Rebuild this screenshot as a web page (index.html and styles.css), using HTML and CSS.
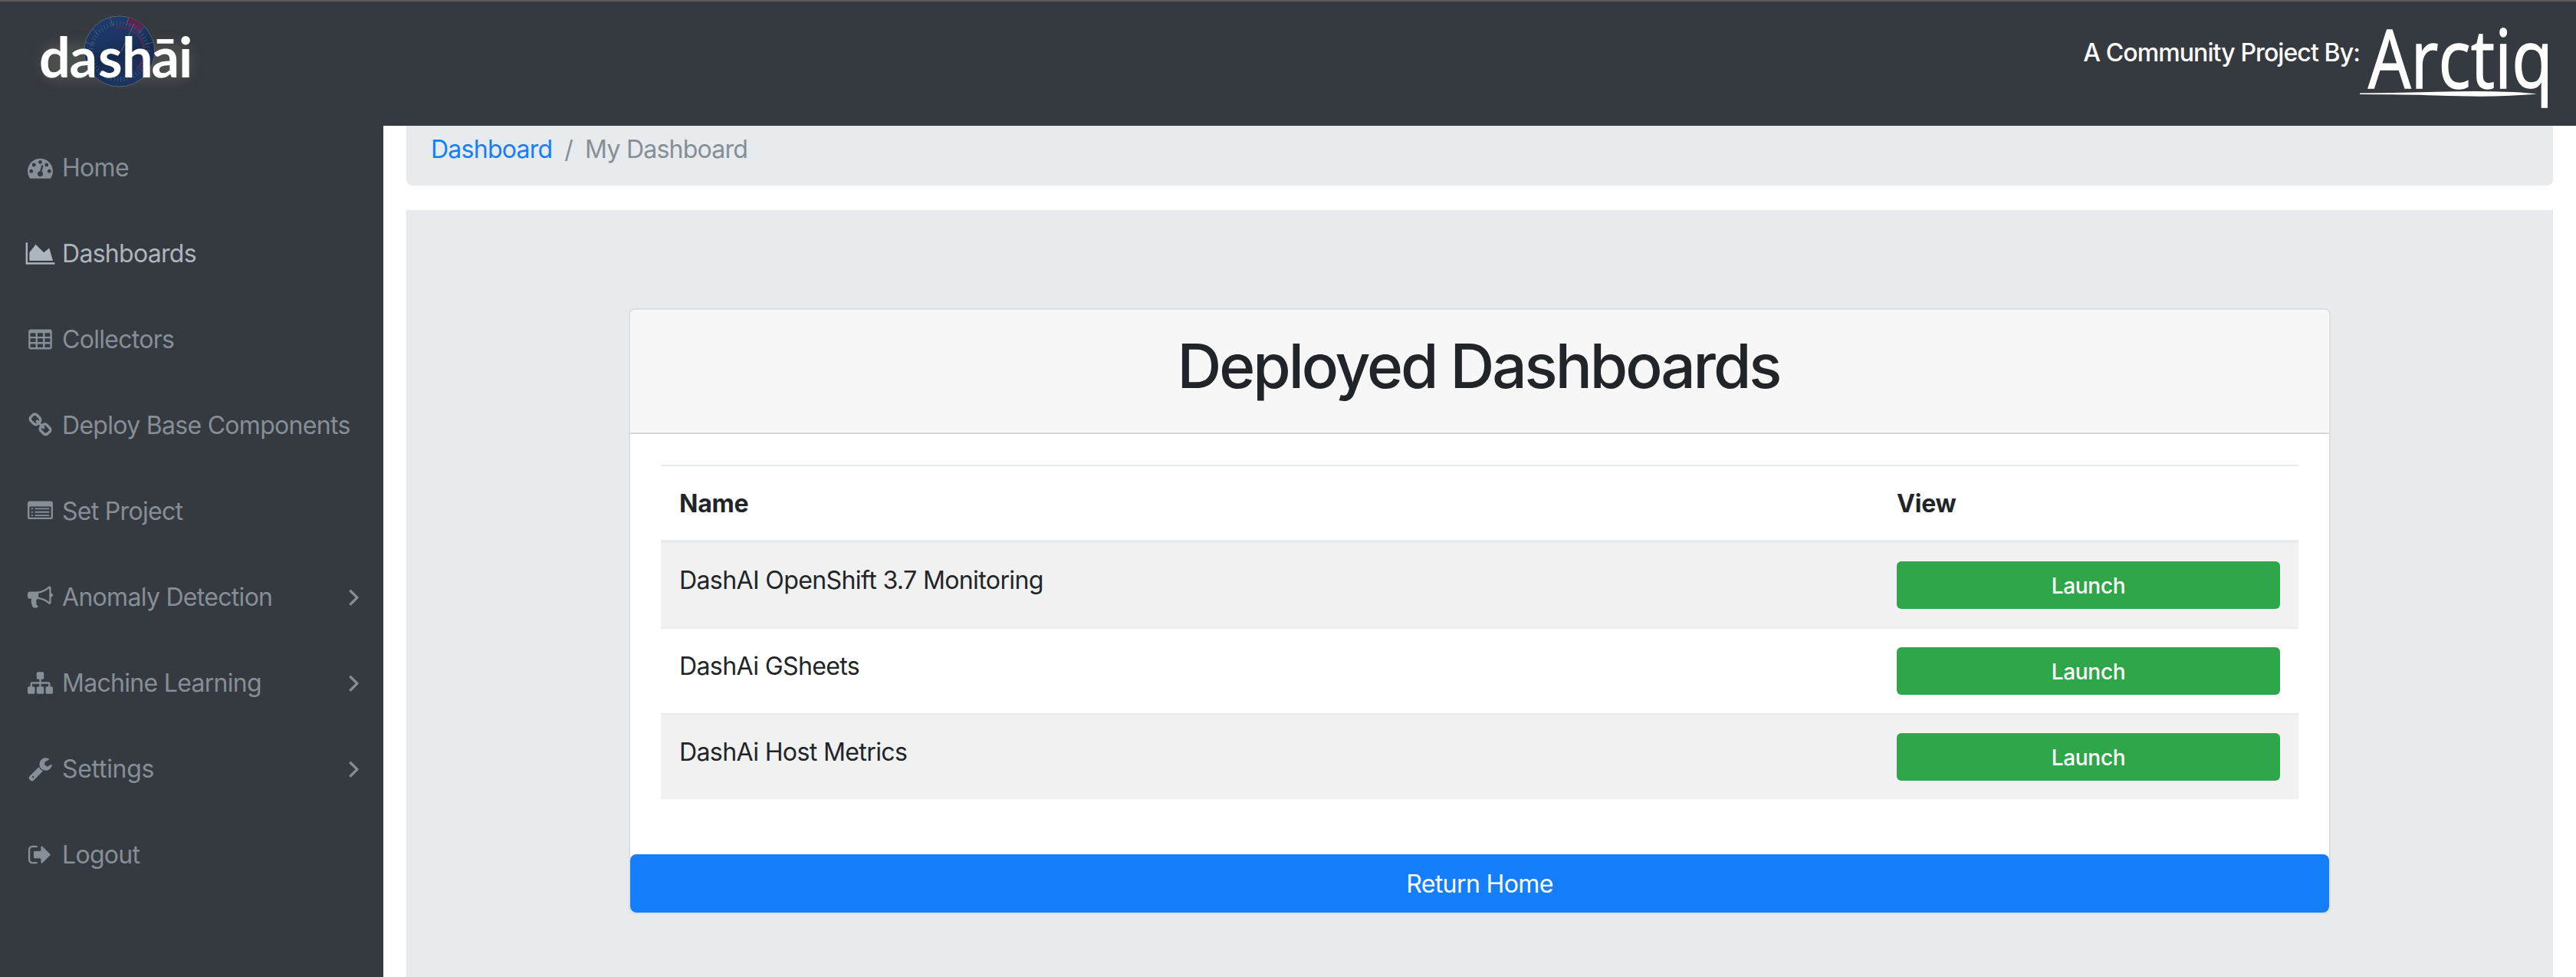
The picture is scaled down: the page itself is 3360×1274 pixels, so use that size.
FILE: index.html
```
<!DOCTYPE html>
<html lang="en">
<head>
<meta charset="utf-8">
<title>Dashboards</title>
<link rel="stylesheet" href="styles.css">
</head>
<body>
<header class="topbar">
  <svg class="brand" viewBox="0 0 240 130" role="img" aria-label="dashāi">
    <defs>
      <linearGradient id="dial" x1="0" y1="0" x2="0.3" y2="1">
        <stop offset="0" stop-color="#1d3c70"/><stop offset="0.4" stop-color="#1b3665"/><stop offset="0.65" stop-color="#162a4f"/><stop offset="1" stop-color="#1b3461"/>
      </linearGradient>
      <filter id="glow" x="-20%" y="-40%" width="140%" height="180%"><feGaussianBlur stdDeviation="8"/></filter>
    </defs>
    <rect x="24" y="55" width="196" height="48" rx="20" fill="#6b7060" opacity=".4" filter="url(#glow)"/>
    <circle cx="125.700" cy="65" r="46" fill="url(#dial)" stroke="#5a6268" stroke-width="1"/>
    <path d="M137.600 20.500A46 46 0 0 1 158.200 32.500L151 39.700A36 36 0 0 0 135 30.300Z" fill="#5a2450"/>
    <circle cx="125.700" cy="65" r="36.500" fill="none" stroke="#50617d" stroke-width="6" stroke-dasharray="1 3.200" pathLength="229" opacity=".7"/>
    <path d="M90 35l8 8M114 21l3 11M81 53l11 3M137.600 21l-3 11M158 33l-8 8M170 53l-11 3" stroke="#4a5d7c" stroke-width="1" fill="none"/>
    <path d="M121 34A31.500 31.500 0 0 1 148 88" fill="none" stroke="#552a50" stroke-width="2.500"/>
    <path d="M145 29L128 65" stroke="#566780" stroke-width="1"/>
    <text class="brand-text" y="98.500" x="21 60.5 98 129 167.500 203">dashāi</text>
  </svg>
  <div class="sponsor">
    <span class="sponsor-label">A Community Project By:</span>
    <svg class="sponsor-logo" viewBox="0 -20 270 162" role="img" aria-label="Arctiq">
      <text class="sponsor-text" x="11" y="95" textLength="241" lengthAdjust="spacingAndGlyphs">Arctiq</text>
      <path d="M0 101.500Q60 101 100 99.800Q155 98 190 99.800Q215 100.500 231 102.500Q215 104 190 105Q155 106.500 100 104.500Q60 103 0 103Z" fill="#fff"/>
    </svg>
  </div>
</header>
<div class="layout">
  <nav class="sidebar">
    <a class="nav-item"><svg class="icon" viewBox="0 0 1792 1792"><path d="M384 1152q0-53-37.500-90.500t-90.500-37.500-90.500 37.500-37.500 90.500 37.500 90.500 90.500 37.500 90.500-37.500 37.500-90.500zm192-448q0-53-37.500-90.500t-90.500-37.500-90.500 37.500-37.500 90.500 37.500 90.500 90.500 37.500 90.500-37.500 37.500-90.500zm428 481l101-382q6-26-7.500-48.500t-38.500-29.500-48 6.500-30 39.500l-101 382q-60 5-107 43.500t-63 98.500q-20 77 20 146t117 89 146-20 89-117q16-60-6-117t-72-91zm660-33q0-53-37.500-90.500t-90.500-37.500-90.500 37.500-37.500 90.500 37.500 90.500 90.500 37.500 90.500-37.500 37.500-90.500zm-640-640q0-53-37.500-90.500t-90.500-37.500-90.500 37.500-37.500 90.500 37.500 90.500 90.500 37.500 90.500-37.500 37.500-90.500zm448 192q0-53-37.500-90.500t-90.500-37.500-90.500 37.500-37.500 90.500 37.500 90.500 90.500 37.500 90.500-37.500 37.500-90.500zm320 448q0 261-141 483-19 29-54 29h-1402q-35 0-54-29-141-221-141-483 0-182 71-348t191-286 286-191 348-71 348 71 286 191 191 286 71 348z"/></svg><span class="nav-text">Home</span></a>
    <a class="nav-item active"><svg class="icon" viewBox="0 0 1792 1792"><path transform="translate(-128 0)" d="M2048 1536v128h-2048v-1536h128v1408h1920zm-384-1024l256 896h-1664v-576l448-576 576 576z"/></svg><span class="nav-text">Dashboards</span></a>
    <a class="nav-item"><svg class="icon" viewBox="0 0 1792 1792"><path transform="translate(64 64)" fill-rule="evenodd" d="M160 128h1344a160 160 0 0 1 160 160v1088a160 160 0 0 1-160 160h-1344a160 160 0 0 1-160-160v-1088a160 160 0 0 1 160-160zM160 384h320q32 0 32 32v192q0 32-32 32h-320q-32 0-32-32v-192q0-32 32-32zM672 384h320q32 0 32 32v192q0 32-32 32h-320q-32 0-32-32v-192q0-32 32-32zM1184 384h320q32 0 32 32v192q0 32-32 32h-320q-32 0-32-32v-192q0-32 32-32zM160 768h320q32 0 32 32v192q0 32-32 32h-320q-32 0-32-32v-192q0-32 32-32zM672 768h320q32 0 32 32v192q0 32-32 32h-320q-32 0-32-32v-192q0-32 32-32zM1184 768h320q32 0 32 32v192q0 32-32 32h-320q-32 0-32-32v-192q0-32 32-32zM160 1152h320q32 0 32 32v192q0 32-32 32h-320q-32 0-32-32v-192q0-32 32-32zM672 1152h320q32 0 32 32v192q0 32-32 32h-320q-32 0-32-32v-192q0-32 32-32zM1184 1152h320q32 0 32 32v192q0 32-32 32h-320q-32 0-32-32v-192q0-32 32-32z"/></svg><span class="nav-text">Collectors</span></a>
    <a class="nav-item"><svg class="icon" viewBox="0 0 1792 1792"><path d="M1520 1216q0-40-28-68l-208-208q-28-28-68-28-42 0-72 32 3 3 19 18.500t21.500 21.500 15 19 13 25.500 3.500 27.500q0 40-28 68t-68 28q-15 0-27.500-3.500t-25.500-13-19-15-21.500-21.500-18.500-19q-33 31-33 73 0 40 28 68l206 207q27 27 68 27 40 0 68-26l147-146q28-28 28-67zm-703-705q0-40-28-68l-206-207q-28-28-68-28-39 0-68 27l-147 146q-28 28-28 67 0 40 28 68l208 208q27 27 68 27 42 0 72-31-3-3-19-18.500t-21.500-21.500-15-19-13-25.500-3.500-27.500q0-40 28-68t68-28q15 0 27.500 3.500t25.500 13 19 15 21.500 21.500 18.500 19q33-31 33-73zm895 705q0 120-85 203l-147 146q-83 83-203 83-121 0-204-85l-206-207q-83-83-83-203 0-123 88-209l-88-88q-86 88-208 88-120 0-204-84l-208-208q-84-84-84-204t85-203l147-146q83-83 203-83 121 0 204 85l206 207q83 83 83 203 0 123-88 209l88 88q86-88 208-88 120 0 204 84l208 208q84 84 84 204z"/></svg><span class="nav-text">Deploy Base Components</span></a>
    <a class="nav-item"><svg class="icon" viewBox="0 0 1792 1792"><path transform="translate(0 64)" fill-rule="evenodd" d="M160 128h1472a160 160 0 0 1 160 160v960a160 160 0 0 1-160 160h-1472a160 160 0 0 1-160-160v-960a160 160 0 0 1 160-160zM160 512q-32 0-32 32v704q0 32 32 32h1472q32 0 32-32v-704q0-32-32-32zM256 608h128v100h-128zM512 608h1024v100h-1024zM256 850h128v100h-128zM512 850h1024v100h-1024zM256 1090h128v100h-128zM512 1090h1024v100h-1024z"/></svg><span class="nav-text">Set Project</span></a>
    <a class="nav-item"><svg class="icon" viewBox="0 0 1792 1792"><path d="M1664 640q53 0 90.500 37.500t37.500 90.500-37.500 90.500-90.500 37.500v384q0 52-38 90t-90 38q-417-347-812-380-58 19-91 66t-31 100.500 40 92.500q-20 33-23 65.500t6 58 33.500 55 48 50 61.500 50.500q-29 58-111.500 83t-168.500 11.500-132-55.500q-7-23-29.500-87.500t-32-94.500-23-89-15-101 3.500-98.500 22-110.500h-122q-66 0-113-47t-47-113v-192q0-66 47-113t113-47h480q435 0 896-384 52 0 90 38t38 90v384zm-128 604v-954q-394 302-768 343v270q377 42 768 341z"/></svg><span class="nav-text">Anomaly Detection</span><svg class="caret" viewBox="0 0 1792 1792"><path d="M1171 960q0 13-10 23l-466 466q-10 10-23 10t-23-10l-50-50q-10-10-10-23t10-23l393-393-393-393q-10-10-10-23t10-23l50-50q10-10 23-10t23 10l466 466q10 10 10 23z"/></svg></a>
    <a class="nav-item"><svg class="icon" viewBox="0 0 1792 1792"><path d="M1792 1248v320q0 40-28 68t-68 28h-320q-40 0-68-28t-28-68v-320q0-40 28-68t68-28h96v-192h-512v192h96q40 0 68 28t28 68v320q0 40-28 68t-68 28h-320q-40 0-68-28t-28-68v-320q0-40 28-68t68-28h96v-192h-512v192h96q40 0 68 28t28 68v320q0 40-28 68t-68 28h-320q-40 0-68-28t-28-68v-320q0-40 28-68t68-28h96v-192q0-52 38-90t90-38h512v-192h-96q-40 0-68-28t-28-68v-320q0-40 28-68t68-28h320q40 0 68 28t28 68v320q0 40-28 68t-68 28h-96v192h512q52 0 90 38t38 90v192h96q40 0 68 28t28 68z"/></svg><span class="nav-text">Machine Learning</span><svg class="caret" viewBox="0 0 1792 1792"><path d="M1171 960q0 13-10 23l-466 466q-10 10-23 10t-23-10l-50-50q-10-10-10-23t10-23l393-393-393-393q-10-10-10-23t10-23l50-50q10-10 23-10t23 10l466 466q10 10 10 23z"/></svg></a>
    <a class="nav-item"><svg class="icon" viewBox="0 0 1792 1792"><path d="M448 1472q0-26-19-45t-45-19-45 19-19 45 19 45 45 19 45-19 19-45zm644-420l-682 682q-37 37-90 37-52 0-91-37l-106-108q-38-36-38-90 0-53 38-91l681-681q39 98 114.500 173.500t173.500 114.500zm634-435q0 39-23 106-47 134-164.500 217.500t-258.500 83.500q-185 0-316.500-131.500t-131.500-316.500 131.500-316.500 316.500-131.500q58 0 121.500 16.500t107.500 46.500q16 11 16 28t-16 28l-293 169v224l193 107q5-3 79-48.500t135.500-81 70.500-35.500q15 0 23.500 10t8.500 25z"/></svg><span class="nav-text nav-text-wide">Settings</span><svg class="caret" viewBox="0 0 1792 1792"><path d="M1171 960q0 13-10 23l-466 466q-10 10-23 10t-23-10l-50-50q-10-10-10-23t10-23l393-393-393-393q-10-10-10-23t10-23l50-50q10-10 23-10t23 10l466 466q10 10 10 23z"/></svg></a>
    <a class="nav-item"><svg class="icon" viewBox="0 0 1792 1792"><path transform="translate(48 0)" d="M640 1440q0 4 1 20t.5 26.500-3 23.500-10 19.500-20.500 6.500h-320q-119 0-203.500-84.500t-84.500-203.500v-704q0-119 84.500-203.500t203.500-84.500h320q13 0 22.500 9.500t9.500 22.500q0 4 1 20t.5 26.500-3 23.500-10 19.500-20.500 6.500h-320q-66 0-113 47t-47 113v704q0 66 47 113t113 47h312l11.500 1 11.500 3 8 5.500 7 9 2 13.500zm928-544q0 26-19 45l-544 544q-19 19-45 19t-45-19-19-45v-288h-448q-26 0-45-19t-19-45v-384q0-26 19-45t45-19h448v-288q0-26 19-45t45-19 45 19l544 544q19 19 19 45z"/></svg><span class="nav-text">Logout</span></a>
  </nav>
  <main class="content">
    <ol class="breadcrumb">
      <li><a class="crumb-link">Dashboard</a></li>
      <li>/</li>
      <li>My Dashboard</li>
    </ol>
    <section class="panel">
      <div class="card">
        <div class="card-header"><h1 class="card-title">Deployed Dashboards</h1></div>
        <div class="card-body">
          <table class="table">
            <colgroup><col><col class="col-view"></colgroup>
            <thead><tr><th>Name</th><th>View</th></tr></thead>
            <tbody>
              <tr><td>DashAI OpenShift 3.7 Monitoring</td><td class="action"><a class="btn btn-success">Launch</a></td></tr>
              <tr><td>DashAi GSheets</td><td class="action"><a class="btn btn-success">Launch</a></td></tr>
              <tr><td>DashAi Host Metrics</td><td class="action"><a class="btn btn-success">Launch</a></td></tr>
            </tbody>
          </table>
        </div>
        <a class="btn btn-primary">Return Home</a>
      </div>
    </section>
  </main>
</div>
</body>
</html>
```
FILE: styles.css
```
* { box-sizing: border-box; }

body {
  margin: 0;
  height: 1274px;
  display: flex;
  flex-direction: column;
  overflow: hidden;
  background: #fff;
  color: #212529;
  font: 400 32px/48px Inter, "Liberation Sans", sans-serif;
  letter-spacing: -0.6px;
}

/* Top bar */
.topbar {
  flex: none;
  height: 164px;
  display: flex;
  justify-content: space-between;
  border-top: 2px solid #5a5a5c;
  background: #353940;
  color: #fff;
}
.brand { width: 240px; height: 130px; margin-left: 30px; }
.brand-text { font: 700 72px Lato, sans-serif; letter-spacing: 0; fill: #fff; }
.sponsor { display: flex; }
.sponsor-label { margin-top: 43px; font-weight: 500; letter-spacing: -0.9px; }
.sponsor-logo { width: 270px; height: 162px; margin: -2px 12px 0 0; }
.sponsor-text {
  font: 400 106px "Open Sans", sans-serif;
  letter-spacing: 0;
  fill: #fff;
  stroke: #fff;
  stroke-width: 1.4px;
}

.layout { flex: 1; display: flex; min-height: 0; }

/* Sidebar */
.sidebar {
  flex: none;
  width: 500px;
  margin-top: -2px;
  background: #353940;
  color: #868e96;
  letter-spacing: -0.7px;
}
.nav-item {
  display: flex;
  align-items: center;
  height: 112px;
  padding: 0 20px 0 36px;
}
.nav-item.active { color: #adb5bd; }
.nav-text { padding-top: 2px; }
.nav-text-wide { letter-spacing: -0.3px; }
.icon {
  flex: none;
  width: 33px;
  height: 33px;
  margin-right: 12px;
  fill: currentColor;
  overflow: visible;
}
.caret {
  width: 36px;
  height: 36px;
  margin-left: auto;
  fill: currentColor;
  stroke: currentColor;
  stroke-width: 40px;
}

/* Content */
.content {
  flex: 1;
  display: flex;
  flex-direction: column;
  gap: 32px;
  padding: 0 30px;
}
.breadcrumb {
  display: flex;
  gap: 16px;
  margin: 0;
  padding: 7px 32px 23px;
  list-style: none;
  border-radius: 0 0 8px 8px;
  background: #e7ebee;
  color: #868e96;
  letter-spacing: -0.75px;
}
.crumb-link { color: #157efb; }
.panel { flex: 1; padding: 128px 290px 0; background: #e7ebee; }

.card {
  display: flex;
  flex-direction: column;
  border: 2px solid #dddfe0;
  border-radius: 8px;
  background: #fff;
}
.card-header {
  padding: 25px 40px 39px;
  border-bottom: 2px solid #d8d8d8;
  border-radius: 6px 6px 0 0;
  background: #f7f7f7;
}
.card-title {
  margin: 0 3px 0 0;
  font-size: 80px;
  font-weight: 500;
  line-height: 96px;
  letter-spacing: -3.05px;
  text-align: center;
}
.card-body { padding: 40px 40px 72px; }

.table { width: 100%; table-layout: fixed; border-collapse: separate; border-spacing: 0; }
.col-view { width: 548px; }
.table th, .table td { padding: 25px 24px 23px; vertical-align: top; text-align: left; border-top: 2px solid #e9ecef; }
.table th { font-weight: 700; letter-spacing: -0.2px; border-bottom: 4px solid #e7ebee; }
.table td { height: 112px; }
.table td.action { padding: 24px; }
.table tbody tr:first-child td { height: 110px; border-top: 0; }
.table tbody tr:nth-child(odd) { background: #f1f1f1; }

.btn { display: block; text-align: center; color: #fff; }
.btn-success {
  height: 62px;
  border-radius: 6px;
  background: #30a64a;
  font-size: 28px;
  font-weight: 500;
  line-height: 64px;
  letter-spacing: -0.3px;
}
.btn-primary { height: 76px; border-radius: 8px; background: #157efb; line-height: 78px; }
```
